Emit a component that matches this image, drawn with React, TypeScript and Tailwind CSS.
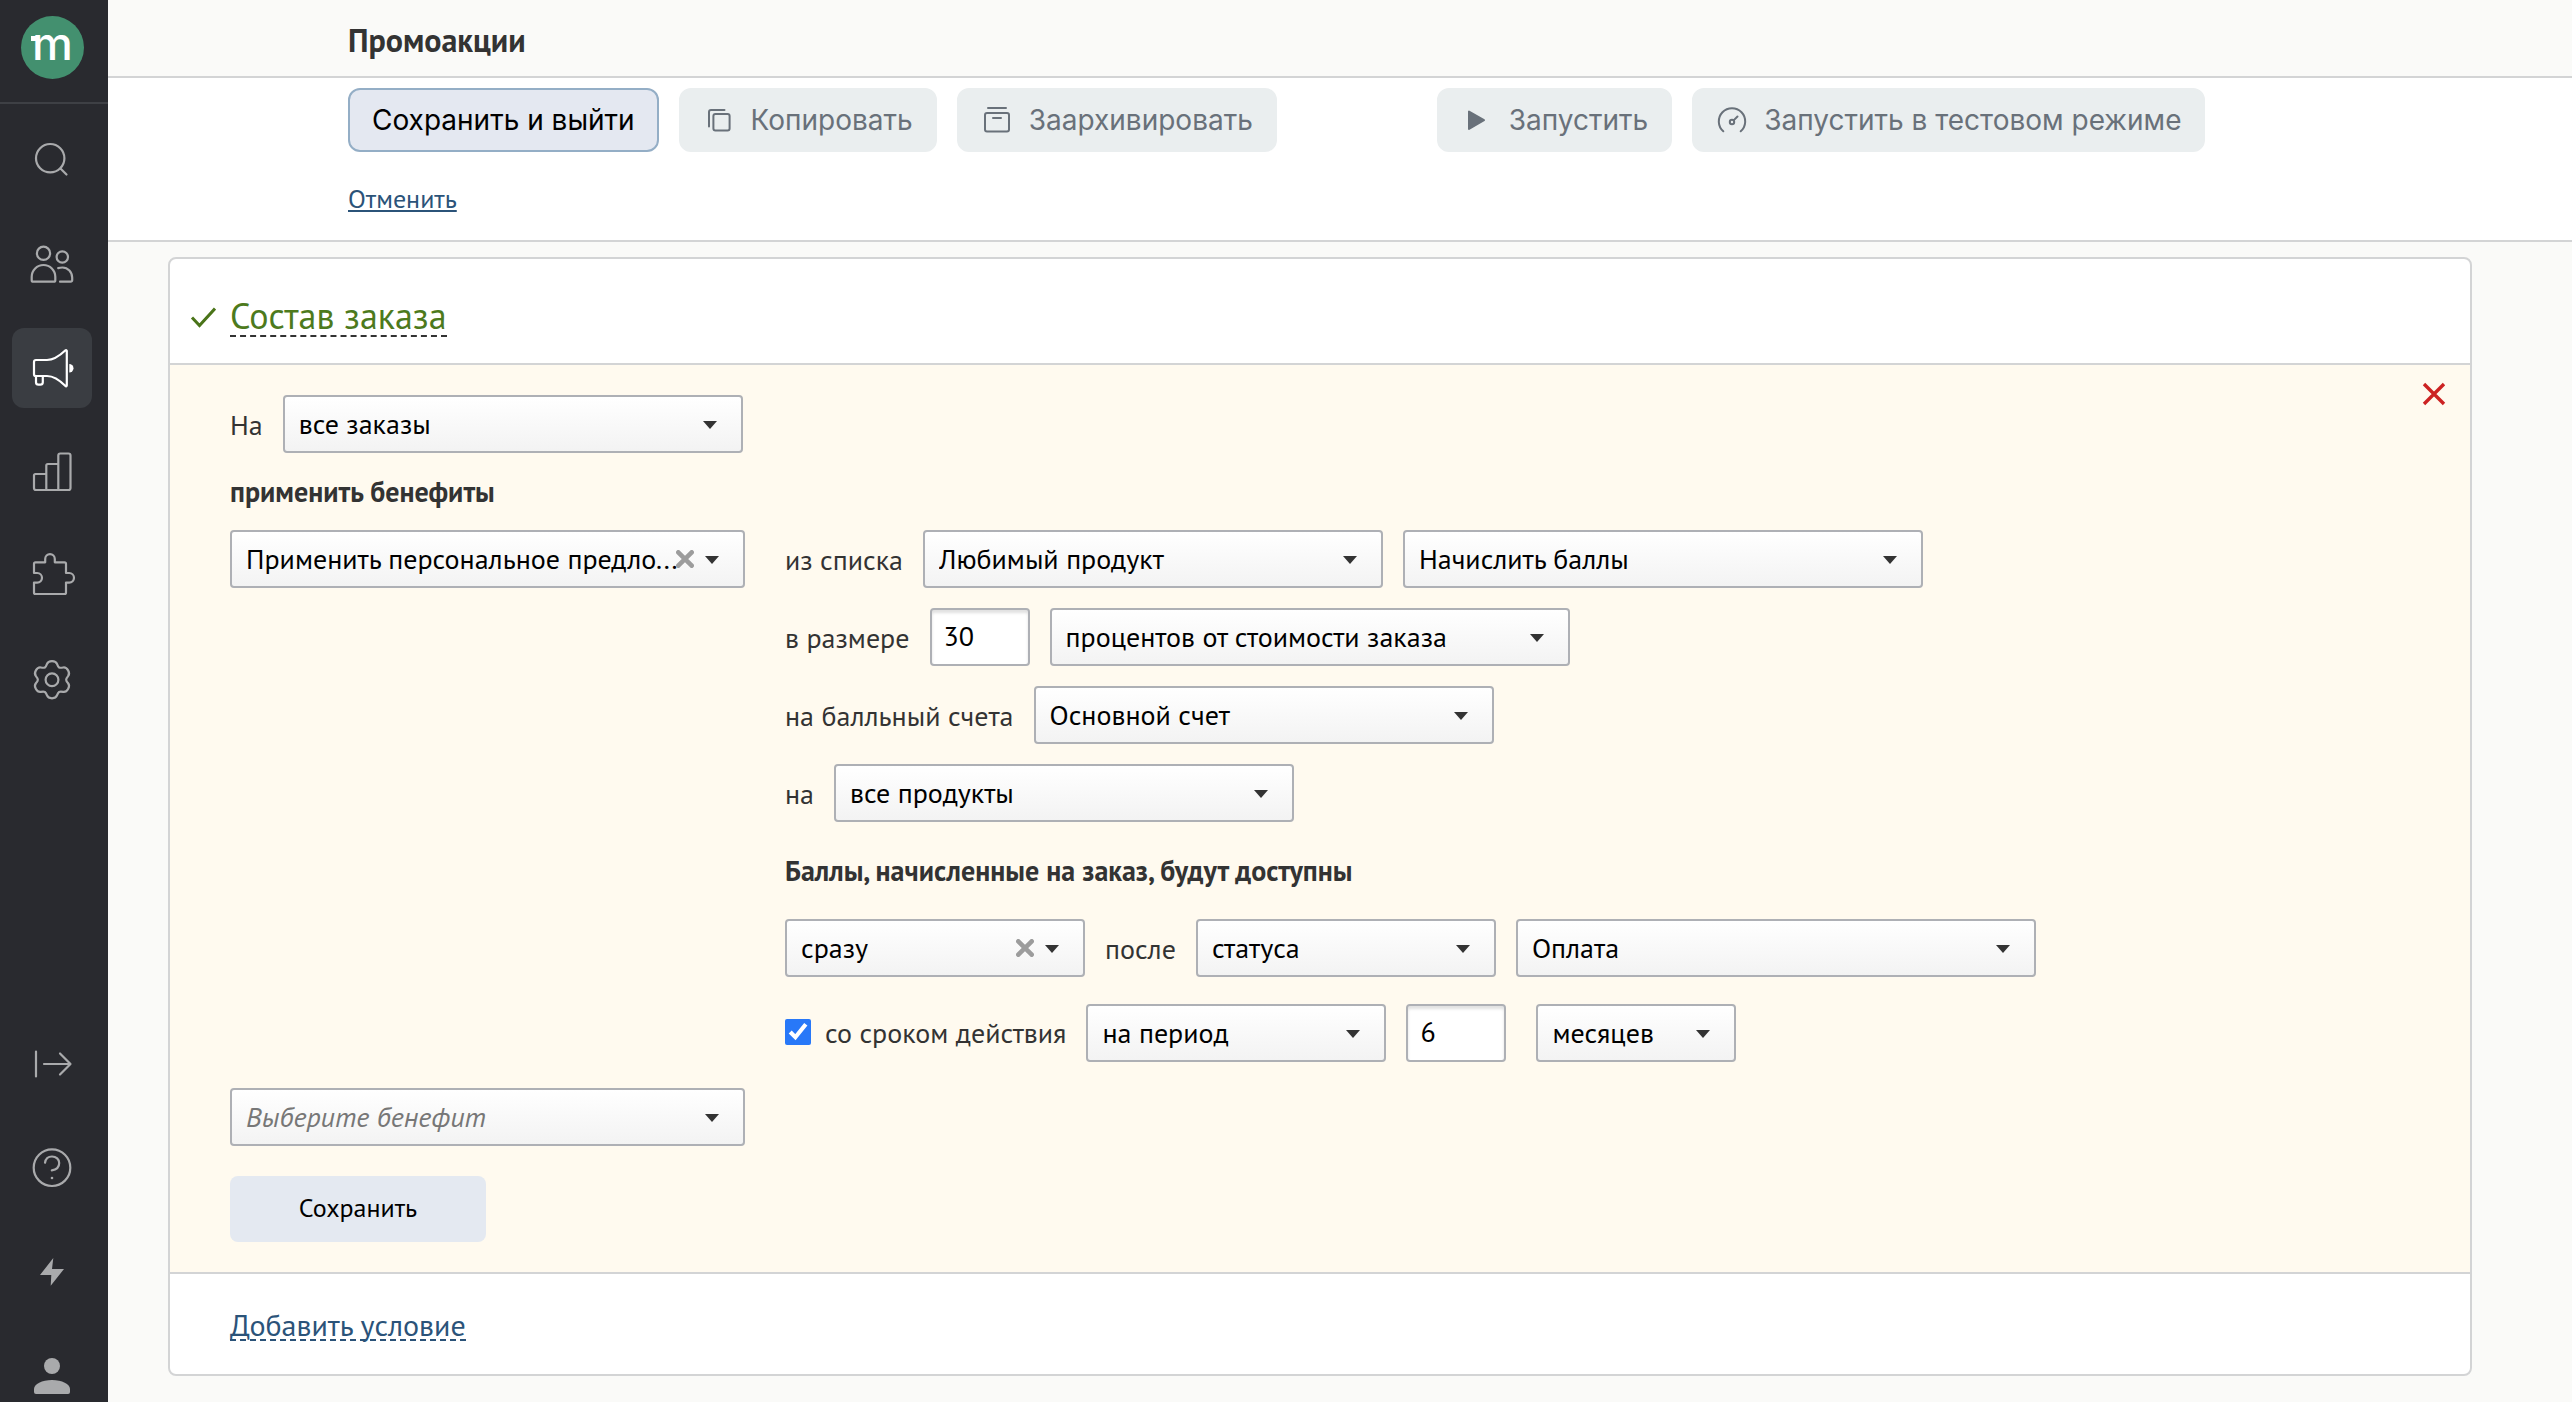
import { useState } from 'react';
import type { ReactNode } from 'react';
import clsx from 'clsx';

interface SelectProps {
  id: string;
  options: string[];
  width: string;
  label?: string;
  placeholder?: string;
  clearable?: boolean;
}

// Контур шестерёнки: 6 зубцов, сглаженных через середины отрезков
function gearPath(cx: number, cy: number) {
  const points: [number, number][] = [];
  for (let i = 0; i < 6; i++) {
    const base = i * 60 - 90;
    for (const [radius, shift] of [[19, -12], [19, 12], [14.2, 25], [14.2, 35]]) {
      const angle = ((base + shift) * Math.PI) / 180;
      points.push([cx + radius * Math.cos(angle), cy + radius * Math.sin(angle)]);
    }
  }
  const mid = (a: [number, number], b: [number, number]) => `${((a[0] + b[0]) / 2).toFixed(2)} ${((a[1] + b[1]) / 2).toFixed(2)}`;
  let d = `M${mid(points[points.length - 1], points[0])}`;
  points.forEach((point, i) => {
    const next = points[(i + 1) % points.length];
    d += `Q${point[0].toFixed(2)} ${point[1].toFixed(2)} ${mid(point, next)}`;
  });
  return d + 'Z';
}

const mainNav = [
  {
    name: 'Поиск',
    icon: (
      <>
        <circle cx="38.2" cy="38.2" r="14.2" />
        <path d="M48.5 48.5l6 6" />
      </>
    ),
  },
  {
    name: 'Клиенты',
    icon: (
      <>
        <circle cx="31.5" cy="29.3" r="6.6" />
        <circle cx="50.3" cy="33" r="5.7" />
        <path d="M19.7 52.8a11.8 11.8 0 0 1 23.6 0v3.4a1.5 1.5 0 0 1-1.5 1.5H21.2a1.5 1.5 0 0 1-1.5-1.5z" />
        <path d="M46.2 44.1c1.3-.4 2.7-.6 4.2-.6 5.6 0 9.8 4.6 9.8 10.2v2.5a1.5 1.5 0 0 1-1.5 1.5H48" />
      </>
    ),
  },
  {
    name: 'Кампании',
    active: true,
    icon: (
      <>
        <path d="M24 32h11c7 0 13-4.5 18.5-9.7a.8.8 0 0 1 1.3.6v34.6a.8.8 0 0 1-1.3.6C48 52.5 42 48 35 48H23.8a1.8 1.8 0 0 1-1.8-1.8V34a2 2 0 0 1 2-2z" />
        <path d="M24 48v6.2a2.5 2.5 0 0 0 2.5 2.5h1.8a2.5 2.5 0 0 0 2.5-2.5V48" />
        <path d="M57.3 36a4.2 4.2 0 0 1 0 8.4z" fill="currentColor" stroke="none" />
      </>
    ),
  },
  {
    name: 'Отчёты',
    icon: (
      <path d="M22 43.5A1.5 1.5 0 0 1 23.5 42H34.3V33.5A1.5 1.5 0 0 1 35.8 32H46.3V23.5A2 2 0 0 1 48.3 21.5H56.5A2 2 0 0 1 58.5 23.5V56A2 2 0 0 1 56.5 58H24A2 2 0 0 1 22 56zM34.3 42v16M46.3 32v26" />
    ),
  },
  {
    name: 'Интеграции',
    icon: (
      <path d="M23.5 26.3H33.2V23a4.8 4.8 0 0 1 9.6 0v3.3H52.5a1.5 1.5 0 0 1 1.5 1.5V37h3.2a4.8 4.8 0 0 1 0 9.6H54v9.9a1.5 1.5 0 0 1-1.5 1.5h-29a1.5 1.5 0 0 1-1.5-1.5v-9.9h3.2a4.8 4.8 0 0 0 0-9.6H22v-9.2a1.5 1.5 0 0 1 1.5-1.5z" />
    ),
  },
  {
    name: 'Настройки',
    icon: (
      <>
        <path d={gearPath(40, 39.7)} />
        <circle cx="40" cy="39.7" r="6.4" />
      </>
    ),
  },
];

const bottomNav = [
  { name: 'Развернуть', icon: <path d="M24 27.5v25M32 40h26M48 29.5L58.5 40L48 50.5" /> },
  {
    name: 'Помощь',
    icon: (
      <>
        <circle cx="40" cy="39.7" r="18.3" />
        <path d="M33 34.7c.6-3.7 3.2-6.2 7-6.2 4.2 0 7.2 2.9 7.2 6.6 0 3.9-3 6.7-7.4 7.3" />
        <circle cx="40" cy="50" r="1.3" fill="currentColor" stroke="none" />
      </>
    ),
  },
  { name: 'События', icon: <path d="M41.3 26L28 43h11.3l-.6 10.7L52 37H40z" fill="currentColor" stroke="none" /> },
  {
    name: 'Профиль',
    icon: (
      <g fill="currentColor" stroke="none">
        <circle cx="40" cy="30" r="8" />
        <path d="M22 56v-3c0-5 8-9 18-9s18 4 18 9v3q0 2-2 2H24q-2 0-2-2z" />
      </g>
    ),
  },
];

function NavItem({ name, icon, active }: { name: string; icon: ReactNode; active?: boolean }) {
  return (
    <a
      href="#"
      aria-label={name}
      className={clsx('block size-20 rounded-xl', active ? 'bg-[#3a3d42] text-white' : 'text-[#a9aaac]')}
    >
      <svg viewBox="0 0 80 80" className="size-20" fill="none" stroke="currentColor" strokeWidth="2.2" strokeLinecap="round" strokeLinejoin="round">
        {icon}
      </svg>
    </a>
  );
}

function Sidebar() {
  return (
    <aside className="sticky top-0 flex h-screen w-27 shrink-0 flex-col overflow-hidden bg-[#292a2f]">
      <a href="#" aria-label="Главная" className="block border-b-2 border-[#3e4045] pt-4 pb-[23px] pl-[21px]">
        <svg viewBox="0 0 63 63" className="size-[63px]">
          <circle cx="31.5" cy="31.5" r="31.5" fill="#43906f" />
          <rect x="10" y="20" width="6" height="5" fill="#fff" />
          <text x="31.5" y="44" textAnchor="middle" fill="#fff" className="font-['Inter',sans-serif] text-[46px] font-medium">m</text>
        </svg>
      </a>
      <nav className="flex flex-1 flex-col gap-6 pt-4 pl-3">
        {mainNav.map((item) => (
          <NavItem key={item.name} {...item} />
        ))}
        <div className="mt-auto -mb-3.5 flex flex-col gap-6">
          {bottomNav.map((item) => (
            <NavItem key={item.name} {...item} />
          ))}
        </div>
      </nav>
    </aside>
  );
}

function ToolButton({ icon, primary, children }: { icon?: ReactNode; primary?: boolean; children: ReactNode }) {
  return (
    <button
      type="button"
      disabled={!primary}
      className={clsx(
        "flex h-16 items-center gap-4 rounded-xl border-2 px-[22px] font-['Inter',sans-serif] text-[28px] whitespace-nowrap",
        primary ? 'border-[#94aec6] bg-[#e4e8f1] text-black' : 'border-[#eaeeef] bg-[#eaeeef] text-[#69717a]'
      )}
    >
      {icon && (
        <svg viewBox="0 0 32 32" className="size-8 shrink-0" fill="none" stroke="currentColor" strokeWidth="2" strokeLinecap="round" strokeLinejoin="round">
          {icon}
        </svg>
      )}
      {children}
    </button>
  );
}

function Select({ id, options, width, label, placeholder, clearable }: SelectProps) {
  const [value, setValue] = useState(placeholder ? '' : options[0]);

  return (
    <div className={clsx('relative shrink-0', width)}>
      <select
        id={id}
        aria-label={label}
        value={value}
        onChange={(e) => setValue(e.target.value)}
        className={clsx(
          'h-[58px] w-full appearance-none rounded border-2 border-[#aeb0b5] bg-linear-to-b from-white to-[#f3f3f3] pr-12 pb-0.5 pl-3.5',
          value ? 'text-black' : 'text-[#777] italic'
        )}
      >
        {placeholder && <option value="">{placeholder}</option>}
        {options.map((option) => (
          <option key={option}>{option}</option>
        ))}
      </select>
      {clearable && (
        <button type="button" aria-label="Очистить" className="absolute top-5 right-[51px]">
          <svg viewBox="0 0 18 18" className="size-[18px]" stroke="#9c9c9c" strokeWidth="4.6" strokeLinecap="round">
            <path d="M2.3 2.3l13.4 13.4M15.7 2.3L2.3 15.7" />
          </svg>
        </button>
      )}
      <svg viewBox="0 0 14 8" className="pointer-events-none absolute top-[26px] right-[26px] h-2 w-3.5" fill="#333">
        <path d="M0 0h14L7 8z" />
      </svg>
    </div>
  );
}

function NumberField({ id, initial, label }: { id: string; initial: string; label?: string }) {
  const [value, setValue] = useState(initial);
  return (
    <input
      id={id}
      type="text"
      inputMode="numeric"
      aria-label={label}
      value={value}
      onChange={(e) => setValue(e.target.value)}
      className="h-[58px] w-25 shrink-0 rounded border-2 border-[#aeb0b5] bg-white px-3 pb-1 text-black shadow-[inset_0_3px_3px_rgba(0,0,0,0.12)]"
    />
  );
}

function Row({ children }: { children: ReactNode }) {
  return <div className="flex flex-wrap items-center gap-5">{children}</div>;
}

export default function App() {
  const [limited, setLimited] = useState(true);

  return (
    <div className="flex min-h-screen bg-[#fafaf8] font-['PT_Sans','Noto_Sans',sans-serif] text-[28px] leading-[37px] text-[#333]">
      <Sidebar />
      <div className="min-w-0 flex-1">
        <header className="flex h-[78px] items-center border-b-2 border-[#d3d4d5] pt-1 pl-60">
          <h1 className="text-[32px] font-bold">Промоакции</h1>
        </header>

        <div className="border-b-2 border-[#d3d4d5] bg-white pt-2.5 pb-6 pl-60">
          <div className="flex flex-wrap gap-40">
            <div className="flex gap-5">
              <ToolButton primary>Сохранить и выйти</ToolButton>
              <ToolButton
                icon={
                  <>
                    <rect x="10.4" y="10" width="16.2" height="16.5" rx="2" />
                    <path d="M6 22.5V8a2 2 0 0 1 2-2h13.5" />
                  </>
                }
              >
                Копировать
              </ToolButton>
              <ToolButton
                icon={
                  <>
                    <rect x="4" y="9" width="24" height="18.5" rx="2" />
                    <path d="M7 4h18M12 14h8" />
                  </>
                }
              >
                Заархивировать
              </ToolButton>
            </div>
            <div className="flex gap-5">
              <ToolButton icon={<path d="M8 7.5v17.5L23 16.2z" fill="currentColor" />}>Запустить</ToolButton>
              <ToolButton
                icon={
                  <>
                    <path d="M7.3 27.3a13.2 13.2 0 1 1 17.4 0" />
                    <circle cx="16" cy="18" r="2.2" />
                    <path d="M17.6 16.4l3.9-3.9" />
                  </>
                }
              >
                Запустить в тестовом режиме
              </ToolButton>
            </div>
          </div>
          <a href="#" className="mt-[30px] block w-fit text-[26px] leading-[34px] text-[#2b5379] underline decoration-2 underline-offset-2">
            Отменить
          </a>
        </div>

        <section className="mt-[15px] mr-25 mb-6 ml-15 overflow-hidden rounded-lg border-2 border-[#d3d4d5] bg-white">
          <div className="flex items-center gap-3.5 border-b-2 border-[#d3d4d5] pt-[38px] pb-[26px] pl-5">
            <svg viewBox="0 0 26 22" className="h-[22px] w-[26px]" fill="none" stroke="#4a7419" strokeWidth="3">
              <path d="M2 11.5l7.5 8L25 2.5" />
            </svg>
            <h2 className="border-b-2 border-dashed border-[#333] text-[36px] leading-[38px] text-[#4d7a1d]">Состав заказа</h2>
          </div>

          <form className="relative border-b-2 border-[#d3d4d5] bg-[#fffaef] py-[30px] pl-15" onSubmit={(e) => e.preventDefault()}>
            <button type="button" aria-label="Закрыть" className="absolute top-[17px] right-6">
              <svg viewBox="0 0 24 24" className="size-6" stroke="#cc2222" strokeWidth="3.4">
                <path d="M2 2l20 20M22 2L2 22" />
              </svg>
            </button>

            <Row>
              <label htmlFor="orders">На</label>
              <Select id="orders" options={['все заказы']} width="w-[460px]" />
            </Row>
            <p className="my-5 font-bold">применить бенефиты</p>

            <div className="flex items-start gap-10">
              <Select id="benefit" label="Бенефит" options={['Применить персональное предло...']} width="w-[515px]" clearable />
              <div className="flex flex-col gap-5">
                <Row>
                  <label htmlFor="list">из списка</label>
                  <Select id="list" options={['Любимый продукт']} width="w-[460px]" />
                  <Select id="action" label="Действие" options={['Начислить баллы']} width="w-[520px]" />
                </Row>
                <Row>
                  <label htmlFor="amount">в размере</label>
                  <NumberField id="amount" initial="30" />
                  <Select id="unit" label="Единица" options={['процентов от стоимости заказа']} width="w-[520px]" />
                </Row>
                <Row>
                  <label htmlFor="account">на балльный счета</label>
                  <Select id="account" options={['Основной счет']} width="w-[460px]" />
                </Row>
                <Row>
                  <label htmlFor="products">на</label>
                  <Select id="products" options={['все продукты']} width="w-[460px]" />
                </Row>
                <p className="py-2.5 font-bold">Баллы, начисленные на заказ, будут доступны</p>
                <Row>
                  <Select id="moment" label="Когда" options={['сразу']} width="w-[300px]" clearable />
                  <label htmlFor="after">после</label>
                  <Select id="after" options={['статуса']} width="w-[300px]" />
                  <Select id="status" label="Статус" options={['Оплата']} width="w-[520px]" />
                </Row>
                <div className="pt-[7px]">
                  <Row>
                    <label className="flex items-center gap-3.5 pb-0.5">
                      <input
                        type="checkbox"
                        checked={limited}
                        onChange={(e) => setLimited(e.target.checked)}
                        className="size-[26px] accent-[#2878f8]"
                      />
                      со сроком действия
                    </label>
                    <Select id="validity" label="Срок действия" options={['на период']} width="w-[300px]" />
                    <div className="flex gap-[30px]">
                      <NumberField id="period" initial="6" label="Длительность" />
                      <Select id="period-unit" label="Период" options={['месяцев']} width="w-[200px]" />
                    </div>
                  </Row>
                </div>
              </div>
            </div>

            <div className="mt-[26px] flex flex-col items-start gap-[30px]">
              <Select id="new-benefit" label="Новый бенефит" options={[]} width="w-[515px]" placeholder="Выберите бенефит" />
              <button type="submit" className="h-[66px] w-64 rounded-lg bg-[#e4e9f1] pb-1 text-[26px] text-black">
                Сохранить
              </button>
            </div>
          </form>

          <div className="pt-[37px] pb-[33px] pl-15">
            <a href="#" className="block w-fit border-b-2 border-dashed border-[#2b5379] text-[30px] leading-7 text-[#2b5379]">
              Добавить условие
            </a>
          </div>
        </section>
      </div>
    </div>
  );
}
